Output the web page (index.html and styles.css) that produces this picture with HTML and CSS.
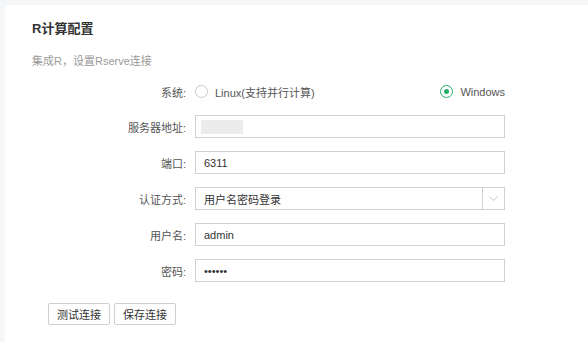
FILE: index.html
```html
<!doctype html>
<html lang="zh-CN">
<head>
  <meta charset="UTF-8">
  <title>R计算配置</title>
  <link rel="stylesheet" href="styles.css">
</head>
<body>
  <div class="card">
    <h1>R计算配置</h1>
    <p class="desc">集成R，设置Rserve连接</p>
    <form class="config-form" onsubmit="event.preventDefault()">
      <label class="form-label">系统:</label>
      <div class="radio-group">
        <label class="radio"><span class="radio-dot"></span>Linux(支持并行计算)</label>
        <label class="radio checked"><span class="radio-dot"></span>Windows</label>
      </div>

      <label class="form-label">服务器地址:</label>
      <div class="field"><span class="masked"></span></div>

      <label class="form-label">端口:</label>
      <input class="field" type="text" value="6311">

      <label class="form-label">认证方式:</label>
      <div class="field select">
        <span class="select-text">用户名密码登录</span>
        <span class="select-arrow">
          <svg width="9" height="5" viewBox="0 0 9 5"><polyline points="0.5,0.5 4.5,4.5 8.5,0.5" fill="none" stroke="#c4c4c4" stroke-width="1"/></svg>
        </span>
      </div>

      <label class="form-label">用户名:</label>
      <input class="field" type="text" value="admin">

      <label class="form-label">密码:</label>
      <input class="field" type="password" value="123456">
    </form>
    <div class="button-group">
      <button type="button">测试连接</button>
      <button type="button">保存连接</button>
    </div>
  </div>
</body>
</html>
```
FILE: styles.css
```css
html, body {
  height: 100%;
}
body {
  margin: 0;
  padding: 5px 0 0 5px;
  box-sizing: border-box;
  overflow: hidden;
  background: #f5f6f8;
  font-family: "Liberation Sans", "Noto Sans CJK SC", sans-serif;
  font-size: 11px;
  color: #333;
}
.card {
  height: 100%;
  background: #fff;
  border-radius: 4px 0 0 0;
  padding: 15px 0 0 27px;
  box-sizing: border-box;
}
h1 {
  margin: 0;
  font-size: 13px;
  line-height: 18px;
  font-weight: bold;
  color: #333;
}
.desc {
  margin: 15px 0 0;
  font-size: 11px;
  line-height: 16px;
  color: #999;
}
.config-form {
  display: grid;
  grid-template-columns: 154px 310px;
  column-gap: 9px;
  row-gap: 13px;
  margin-top: 12px;
  align-items: center;
}
.form-label {
  text-align: right;
  color: #555;
}
.radio-group {
  height: 21px;
  display: flex;
  align-items: center;
  justify-content: space-between;
}
.radio {
  display: flex;
  align-items: center;
  gap: 7px;
  color: #555;
}
.radio-dot {
  width: 11px;
  height: 11px;
  border: 1px solid #c8c8c8;
  border-radius: 50%;
  box-sizing: content-box;
  position: relative;
}
.radio.checked .radio-dot {
  border-color: #22ad6a;
}
.radio.checked .radio-dot::after {
  content: "";
  position: absolute;
  left: 3px;
  top: 3px;
  width: 5px;
  height: 5px;
  border-radius: 50%;
  background: #22ad6a;
}
.field {
  height: 23px;
  border: 1px solid #d0d0d0;
  box-sizing: border-box;
  padding: 0 8px;
  font-family: inherit;
  font-size: 11px;
  color: #333;
  background: #fff;
  outline: none;
  margin: 0;
  display: flex;
  align-items: center;
}
.masked {
  width: 42px;
  height: 14px;
  margin-left: -3px;
  background: #ececec;
}
.select {
  padding-right: 0;
  justify-content: space-between;
}
.select-arrow {
  width: 21px;
  height: 100%;
  border-left: 1px solid #d0d0d0;
  display: flex;
  align-items: center;
  justify-content: center;
}
.button-group {
  display: flex;
  gap: 4px;
  margin: 21px 0 0 16px;
}
button {
  width: 62px;
  height: 22px;
  padding: 0;
  background: #fff;
  border: 1px solid #cfcfcf;
  border-radius: 2px;
  font-family: inherit;
  font-size: 11px;
  color: #333;
  cursor: pointer;
}
```
